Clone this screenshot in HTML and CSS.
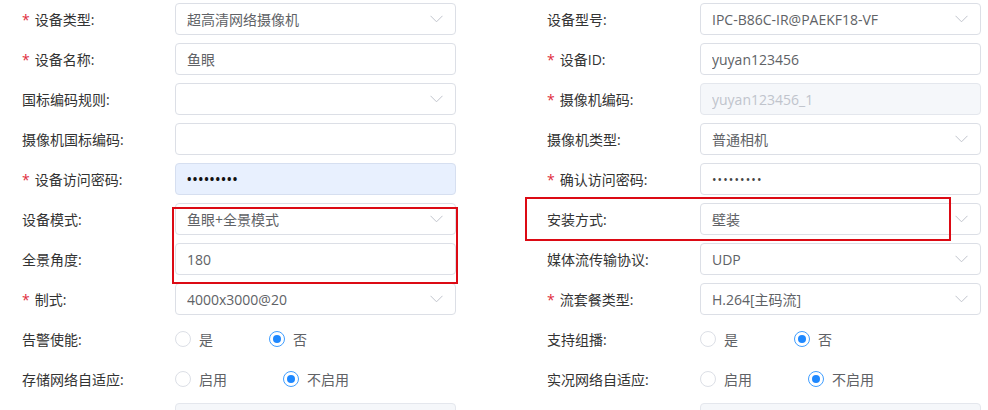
FILE: index.html
```html
<!DOCTYPE html>
<html lang="zh-CN">
<head>
<meta charset="utf-8">
<title>设备信息</title>
<link rel="stylesheet" href="styles.css">
</head>
<body>
<div class="form">
  <div class="item"><div class="label"><span class="req">*</span>设备类型:</div><div class="control select"><span class="val">超高清网络摄像机</span><svg class="arrow" width="13" height="8" viewBox="0 0 13 8"><path d="M0.5 0.8 L6.5 6.8 L12.5 0.8" fill="none" stroke="#c0c4cc" stroke-width="1"/></svg></div></div>
  <div class="item"><div class="label">设备型号:</div><div class="control select"><span class="val">IPC-B86C-IR@PAEKF18-VF</span><svg class="arrow" width="13" height="8" viewBox="0 0 13 8"><path d="M0.5 0.8 L6.5 6.8 L12.5 0.8" fill="none" stroke="#c0c4cc" stroke-width="1"/></svg></div></div>

  <div class="item"><div class="label"><span class="req">*</span>设备名称:</div><div class="control"><span class="val">鱼眼</span></div></div>
  <div class="item"><div class="label"><span class="req">*</span>设备ID:</div><div class="control"><span class="val">yuyan123456</span></div></div>

  <div class="item"><div class="label">国标编码规则:</div><div class="control select"><span class="val"></span><svg class="arrow" width="13" height="8" viewBox="0 0 13 8"><path d="M0.5 0.8 L6.5 6.8 L12.5 0.8" fill="none" stroke="#c0c4cc" stroke-width="1"/></svg></div></div>
  <div class="item"><div class="label"><span class="req">*</span>摄像机编码:</div><div class="control disabled"><span class="val">yuyan123456_1</span></div></div>

  <div class="item"><div class="label">摄像机国标编码:</div><div class="control"><span class="val"></span></div></div>
  <div class="item"><div class="label">摄像机类型:</div><div class="control select"><span class="val">普通相机</span><svg class="arrow" width="13" height="8" viewBox="0 0 13 8"><path d="M0.5 0.8 L6.5 6.8 L12.5 0.8" fill="none" stroke="#c0c4cc" stroke-width="1"/></svg></div></div>

  <div class="item"><div class="label"><span class="req">*</span>设备访问密码:</div><div class="control autofill"><span class="val dots strong">•••••••••</span></div></div>
  <div class="item"><div class="label"><span class="req">*</span>确认访问密码:</div><div class="control"><span class="val dots">•••••••••</span></div></div>

  <div class="item"><div class="label">设备模式:</div><div class="control select"><span class="val">鱼眼+全景模式</span><svg class="arrow" width="13" height="8" viewBox="0 0 13 8"><path d="M0.5 0.8 L6.5 6.8 L12.5 0.8" fill="none" stroke="#c0c4cc" stroke-width="1"/></svg></div></div>
  <div class="item"><div class="label">安装方式:</div><div class="control select"><span class="val">壁装</span><svg class="arrow" width="13" height="8" viewBox="0 0 13 8"><path d="M0.5 0.8 L6.5 6.8 L12.5 0.8" fill="none" stroke="#c0c4cc" stroke-width="1"/></svg></div></div>

  <div class="item"><div class="label">全景角度:</div><div class="control"><span class="val">180</span></div></div>
  <div class="item"><div class="label">媒体流传输协议:</div><div class="control select"><span class="val">UDP</span><svg class="arrow" width="13" height="8" viewBox="0 0 13 8"><path d="M0.5 0.8 L6.5 6.8 L12.5 0.8" fill="none" stroke="#c0c4cc" stroke-width="1"/></svg></div></div>

  <div class="item"><div class="label"><span class="req">*</span>制式:</div><div class="control select"><span class="val">4000x3000@20</span><svg class="arrow" width="13" height="8" viewBox="0 0 13 8"><path d="M0.5 0.8 L6.5 6.8 L12.5 0.8" fill="none" stroke="#c0c4cc" stroke-width="1"/></svg></div></div>
  <div class="item"><div class="label"><span class="req">*</span>流套餐类型:</div><div class="control select"><span class="val">H.264[主码流]</span><svg class="arrow" width="13" height="8" viewBox="0 0 13 8"><path d="M0.5 0.8 L6.5 6.8 L12.5 0.8" fill="none" stroke="#c0c4cc" stroke-width="1"/></svg></div></div>

  <div class="item"><div class="label">告警使能:</div><div class="radios"><span class="radio"><i class="circle"></i>是</span><span class="radio"><i class="circle on"></i>否</span></div></div>
  <div class="item"><div class="label">支持组播:</div><div class="radios"><span class="radio"><i class="circle"></i>是</span><span class="radio"><i class="circle on"></i>否</span></div></div>

  <div class="item"><div class="label">存储网络自适应:</div><div class="radios"><span class="radio"><i class="circle"></i>启用</span><span class="radio"><i class="circle on"></i>不启用</span></div></div>
  <div class="item"><div class="label">实况网络自适应:</div><div class="radios"><span class="radio"><i class="circle"></i>启用</span><span class="radio"><i class="circle on"></i>不启用</span></div></div>

  <div class="item"><div class="label"></div><div class="control disabled"><span class="val"></span></div></div>
  <div class="item"><div class="label"></div><div class="control disabled"><span class="val"></span></div></div>

  <div class="mark mark-left"></div>
  <div class="mark mark-right"></div>
</div>
</body>
</html>
```

FILE: styles.css
```css
html, body {
  margin: 0;
  padding: 0;
  background: #ffffff;
  overflow: hidden;
  height: 410px;
}

body {
  font-family: "Open Sans", "Noto Sans CJK SC", sans-serif;
  font-size: 14px;
  color: #333333;
}

.form {
  position: relative;
  box-sizing: border-box;
  height: 410px;
  overflow: hidden;
  display: grid;
  grid-template-columns: 434px 434px;
  grid-auto-rows: 32px;
  column-gap: 91px;
  row-gap: 8px;
  padding: 3px 0 0 22px;
}

.item {
  display: flex;
  align-items: center;
  height: 32px;
}

.label {
  width: 153px;
  flex: none;
  white-space: nowrap;
  color: #333333;
}

.req {
  color: #e02d3c;
  margin-right: 5px;
}

.control {
  box-sizing: border-box;
  width: 281px;
  height: 32px;
  flex: none;
  border: 1px solid #dcdfe6;
  border-radius: 4px;
  background: #ffffff;
  display: flex;
  align-items: center;
  padding: 0 12px 0 11px;
  color: #606266;
}

.val {
  flex: 1;
  white-space: nowrap;
  overflow: hidden;
}

.arrow {
  flex: none;
  display: block;
}

.disabled {
  background: #f5f7fa;
  border-color: #e4e7ed;
  color: #c0c4cc;
}

.autofill {
  background: #e8f0fe;
  border-color: #d6dff0;
}

.dots {
  letter-spacing: 1.1px;
  font-size: 12px;
  color: #444444;
}

.dots.strong {
  color: #111111;
  font-weight: bold;
  letter-spacing: 1.2px;
}

.radios {
  display: flex;
  align-items: center;
  gap: 56px;
  color: #606266;
}

.radio {
  display: flex;
  align-items: center;
  gap: 8px;
}

.circle {
  box-sizing: border-box;
  width: 16px;
  height: 16px;
  border: 1px solid #dcdfe6;
  border-radius: 50%;
  display: flex;
  align-items: center;
  justify-content: center;
  background: #ffffff;
}

.circle.on {
  border-color: #409eff;
}

.circle.on::after {
  content: "";
  width: 8px;
  height: 8px;
  border-radius: 50%;
  background: #1e88ff;
}

.mark {
  position: absolute;
  box-sizing: border-box;
  border: 2px solid #dc0a14;
}

.mark-left {
  left: 172px;
  top: 207px;
  width: 286px;
  height: 77px;
}

.mark-right {
  left: 525px;
  top: 197px;
  width: 426px;
  height: 44px;
}
```
